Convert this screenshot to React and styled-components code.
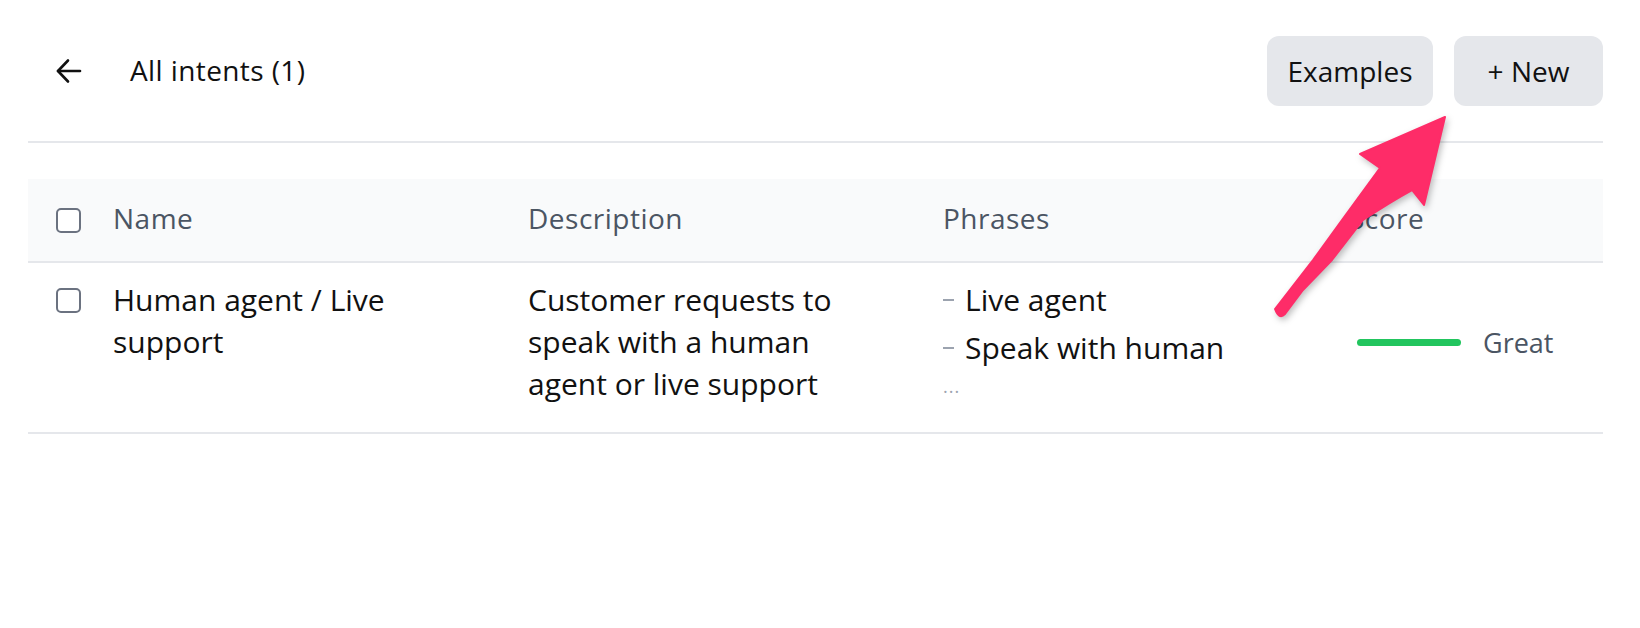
import React from "react";
import styled, { createGlobalStyle } from "styled-components";

const GlobalStyle = createGlobalStyle`
  body {
    margin: 0;
    background: #fff;
    font-family: "Open Sans", "Noto Sans", sans-serif;
    color: #111827;
  }
`;

const Page = styled.div`
  position: relative;
  width: 1640px;
  height: 628px;
  padding: 0 37px 0 28px;
  box-sizing: border-box;
  overflow: hidden;
`;

const TopBar = styled.div`
  display: flex;
  align-items: center;
  justify-content: space-between;
  height: 143px;
  border-bottom: 2px solid #e5e7eb;
  box-sizing: border-box;
`;

const TitleArea = styled.div`
  display: flex;
  align-items: center;
  padding-left: 28px;
`;

const BackButton = styled.div`
  display: flex;
  width: 26px;
  height: 26px;
  cursor: pointer;
`;

const Title = styled.h1`
  margin: 0 0 2px 48px;
  font-size: 28px;
  font-weight: 500;
  letter-spacing: 0.4px;
  color: #111;
`;

const Actions = styled.div`
  display: flex;
  gap: 21px;
`;

const Button = styled.button`
  width: ${(p) => p.$width}px;
  height: 70px;
  border: none;
  border-radius: 12px;
  background: #e5e7eb;
  font-family: inherit;
  font-size: 28px;
  font-weight: 500;
  color: #111;
  cursor: pointer;
`;

const Table = styled.div`
  margin-top: 36px;
`;

const Row = styled.div`
  display: grid;
  grid-template-columns: 85px 415px 415px 406px 1fr;
  border-bottom: 2px solid #e5e7eb;
`;

const HeaderRow = styled(Row)`
  height: 84px;
  align-items: center;
  background: #f9fafb;
  box-sizing: border-box;
`;

const BodyRow = styled(Row)`
  padding: 16px 0 27px;
  align-items: start;
`;

const CheckCell = styled.div`
  display: flex;
  align-items: center;
  height: 42px;
  padding-left: 28px;
`;

const Checkbox = styled.span`
  display: block;
  width: 25px;
  height: 25px;
  box-sizing: border-box;
  border: 2px solid #6b7280;
  border-radius: 5px;
  background: #fff;
`;

const HeadCell = styled.div`
  padding-bottom: 4px;
  font-size: 28px;
  font-weight: 500;
  letter-spacing: 0.5px;
  color: #4b5563;
`;

const Cell = styled.div`
  padding-right: 70px;
  font-size: 30px;
  line-height: 42px;
  color: #111;
`;

const PhraseList = styled.div`
  display: flex;
  flex-direction: column;
  gap: 6px;
`;

const Phrase = styled.div`
  display: flex;
  align-items: center;
  font-size: 30px;
  line-height: 42px;
  color: #111;
`;

const Dash = styled.span`
  width: 11px;
  height: 2px;
  margin-right: 11px;
  background: #9ca3af;
`;

const More = styled.div`
  margin-top: -3px;
  font-size: 18px;
  line-height: 28px;
  letter-spacing: 1px;
  color: #9ca3af;
`;

const ScoreCell = styled.div`
  align-self: center;
  display: flex;
  align-items: center;
  gap: 22px;
  padding-left: 8px;
`;

const ScoreBar = styled.span`
  width: 104px;
  height: 7px;
  border-radius: 4px;
  background: #22c55e;
`;

const ScoreLabel = styled.span`
  font-size: 27px;
  font-weight: 500;
  color: #4b5563;
`;

const Pointer = styled.svg`
  position: absolute;
  left: 1250px;
  top: 100px;
  width: 210px;
  height: 230px;
  filter: drop-shadow(2px 3px 3px rgba(0, 0, 0, 0.25));
  pointer-events: none;
`;

export default function App() {
  return (
    <>
      <GlobalStyle />
      <Page>
        <TopBar>
          <TitleArea>
            <BackButton>
              <svg width="26" height="26" viewBox="0 0 26 26" fill="none" stroke="#111" strokeWidth="2.6" strokeLinecap="round" strokeLinejoin="round">
                <path d="M24 13H2" />
                <path d="M12 2.5 2 13l10 10.5" />
              </svg>
            </BackButton>
            <Title>All intents (1)</Title>
          </TitleArea>
          <Actions>
            <Button $width={166}>Examples</Button>
            <Button $width={149}>+ New</Button>
          </Actions>
        </TopBar>

        <Table>
          <HeaderRow>
            <CheckCell>
              <Checkbox />
            </CheckCell>
            <HeadCell>Name</HeadCell>
            <HeadCell>Description</HeadCell>
            <HeadCell>Phrases</HeadCell>
            <HeadCell>Score</HeadCell>
          </HeaderRow>

          <BodyRow>
            <CheckCell>
              <Checkbox />
            </CheckCell>
            <Cell>Human agent / Live support</Cell>
            <Cell>Customer requests to speak with a human agent or live support</Cell>
            <PhraseList>
              <Phrase>
                <Dash />
                Live agent
              </Phrase>
              <Phrase>
                <Dash />
                Speak with human
              </Phrase>
              <More>...</More>
            </PhraseList>
            <ScoreCell>
              <ScoreBar />
              <ScoreLabel>Great</ScoreLabel>
            </ScoreCell>
          </BodyRow>
        </Table>

        <Pointer viewBox="0 0 210 230">
          <path
            d="M195 17 L174 105 L162 90 Q140 102 113 120 L82 160 L53 190 L35 214 Q29 220 25 209 L63 160 L92 120 L130 68 L110 54 Z"
            fill="#fe2c68"
            stroke="#fe2c68"
            strokeWidth="2"
            strokeLinejoin="round"
          />
        </Pointer>
      </Page>
    </>
  );
}
